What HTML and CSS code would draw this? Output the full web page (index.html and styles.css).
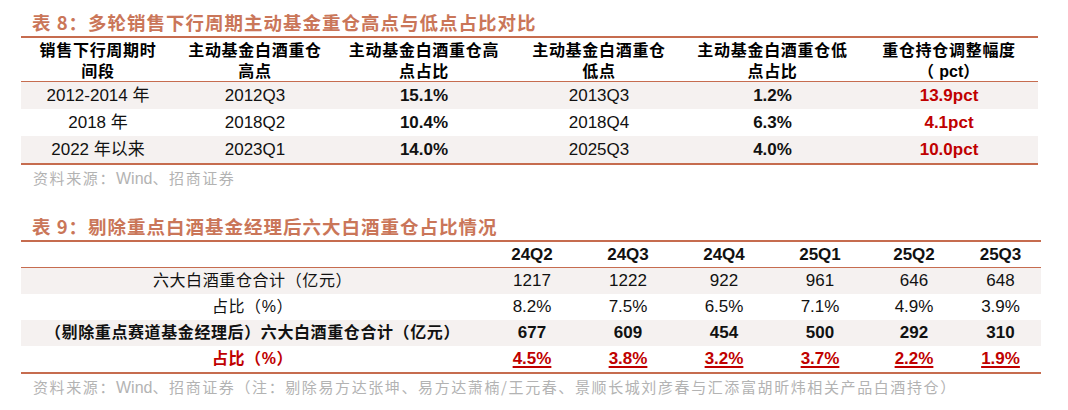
FILE: index.html
```html
<!DOCTYPE html>
<html lang="zh-CN">
<head>
<meta charset="utf-8">
<title>白酒重仓占比</title>
<link rel="stylesheet" href="styles.css">
</head>
<body>
<div class="page">
  <section class="block block-first">
    <h2 class="title">表 8：多轮销售下行周期主动基金重仓高点与低点占比对比</h2>
    <div class="table t1">
      <div class="row head">
        <div class="cell">销售下行周期时<br>间段</div>
        <div class="cell">主动基金白酒重仓<br>高点</div>
        <div class="cell">主动基金白酒重仓高<br>点占比</div>
        <div class="cell">主动基金白酒重仓<br>低点</div>
        <div class="cell">主动基金白酒重仓低<br>点占比</div>
        <div class="cell">重仓持仓调整幅度<br>（<span class="latin"> pct</span>）</div>
      </div>
      <div class="row shade">
        <div class="cell">2012-2014 年</div>
        <div class="cell">2012Q3</div>
        <div class="cell b">15.1%</div>
        <div class="cell">2013Q3</div>
        <div class="cell b">1.2%</div>
        <div class="cell b red">13.9pct</div>
      </div>
      <div class="row">
        <div class="cell">2018 年</div>
        <div class="cell">2018Q2</div>
        <div class="cell b">10.4%</div>
        <div class="cell">2018Q4</div>
        <div class="cell b">6.3%</div>
        <div class="cell b red">4.1pct</div>
      </div>
      <div class="row shade">
        <div class="cell">2022 年以来</div>
        <div class="cell">2023Q1</div>
        <div class="cell b">14.0%</div>
        <div class="cell">2025Q3</div>
        <div class="cell b">4.0%</div>
        <div class="cell b red">10.0pct</div>
      </div>
    </div>
    <p class="source">资料来源：<span class="latin">Wind</span>、招商证券</p>
  </section>

  <section class="block block-second">
    <h2 class="title">表 9：剔除重点白酒基金经理后六大白酒重仓占比情况</h2>
    <div class="table t2">
      <div class="row head">
        <div class="cell label"></div>
        <div class="cell b">24Q2</div>
        <div class="cell b">24Q3</div>
        <div class="cell b">24Q4</div>
        <div class="cell b">25Q1</div>
        <div class="cell b">25Q2</div>
        <div class="cell b">25Q3</div>
      </div>
      <div class="row shade">
        <div class="cell label">六大白酒重仓合计（亿元）</div>
        <div class="cell">1217</div>
        <div class="cell">1222</div>
        <div class="cell">922</div>
        <div class="cell">961</div>
        <div class="cell">646</div>
        <div class="cell">648</div>
      </div>
      <div class="row">
        <div class="cell label">占比（%）</div>
        <div class="cell">8.2%</div>
        <div class="cell">7.5%</div>
        <div class="cell">6.5%</div>
        <div class="cell">7.1%</div>
        <div class="cell">4.9%</div>
        <div class="cell">3.9%</div>
      </div>
      <div class="row shade">
        <div class="cell label b">（剔除重点赛道基金经理后）六大白酒重仓合计（亿元）</div>
        <div class="cell b">677</div>
        <div class="cell b">609</div>
        <div class="cell b">454</div>
        <div class="cell b">500</div>
        <div class="cell b">292</div>
        <div class="cell b">310</div>
      </div>
      <div class="row">
        <div class="cell label b red">占比（%）</div>
        <div class="cell b red"><u>4.5%</u></div>
        <div class="cell b red"><u>3.8%</u></div>
        <div class="cell b red"><u>3.2%</u></div>
        <div class="cell b red"><u>3.7%</u></div>
        <div class="cell b red"><u>2.2%</u></div>
        <div class="cell b red"><u>1.9%</u></div>
      </div>
    </div>
    <p class="source">资料来源：<span class="latin">Wind</span>、招商证券（注：剔除易方达张坤、易方达萧楠/王元春、景顺长城刘彦春与汇添富胡昕炜相关产品白酒持仓）</p>
  </section>
</div>
</body>
</html>
```

FILE: styles.css
```css
* {
  box-sizing: border-box;
}

html, body {
  margin: 0;
  padding: 0;
  background: #ffffff;
}

body {
  font-family: "Liberation Sans", "Noto Sans CJK SC", sans-serif;
  color: #111111;
}

.page {
  padding-left: 21px;
  width: 1068px;
}

.block-first {
  padding-top: 11px;
}

.block-second {
  padding-top: 23px;
}

.title {
  margin: 0 0 3px 0;
  padding-left: 11px;
  font-family: "Noto Sans CJK SC", sans-serif;
  font-size: 18.5px;
  line-height: 22px;
  font-weight: 700;
  letter-spacing: 1px;
  color: #ca7659;
  white-space: nowrap;
}

.table {
  border-top: 2px solid #c66c4f;
  border-bottom: 2px solid #c66c4f;
}

.t1 {
  width: 1017px;
}

.t2 {
  width: 1020px;
}

.row {
  display: grid;
  align-items: center;
}

.t1 .row {
  grid-template-columns: 154px 160px 178px 172px 175px 178px;
  height: 27px;
}

.t2 .row {
  grid-template-columns: 463px 96px 96px 96px 96px 92px 81px;
  height: 26px;
}

.row.head {
  border-bottom: 1px solid #c66c4f;
}

.t1 .row.head {
  height: 44px;
  padding: 1px 0 0;
  align-items: start;
}

.t2 .row.head {
  height: 26px;
  padding-top: 1px;
}

.t1 .head .cell {
  font-family: "Noto Sans CJK SC", sans-serif;
  font-weight: 700;
  font-size: 16px;
  line-height: 21px;
  letter-spacing: 0.7px;
  color: #000000;
}

.t1 .head .cell .latin {
  font-family: "Liberation Sans", sans-serif;
  letter-spacing: 0;
  white-space: pre;
}

.row.shade {
  background: #f5f1f0;
}

.cell {
  text-align: center;
  font-size: 17px;
  line-height: 20px;
  white-space: nowrap;
}

.cell.label {
  font-size: 16px;
  letter-spacing: 0.6px;
}

.cell.b {
  font-weight: 700;
}

.cell.red {
  color: #c00000;
}

.cell u {
  text-decoration-thickness: 2px;
  text-underline-offset: 2px;
}

.source {
  margin: 0;
  padding-left: 12px;
  font-family: "Noto Sans CJK SC", "Liberation Sans", sans-serif;
  font-size: 15px;
  line-height: 26px;
  letter-spacing: 1.6px;
  color: #b3b3b3;
  white-space: nowrap;
}

.source .latin {
  font-family: "Liberation Sans", sans-serif;
  font-size: 16px;
  letter-spacing: 0;
}
```
